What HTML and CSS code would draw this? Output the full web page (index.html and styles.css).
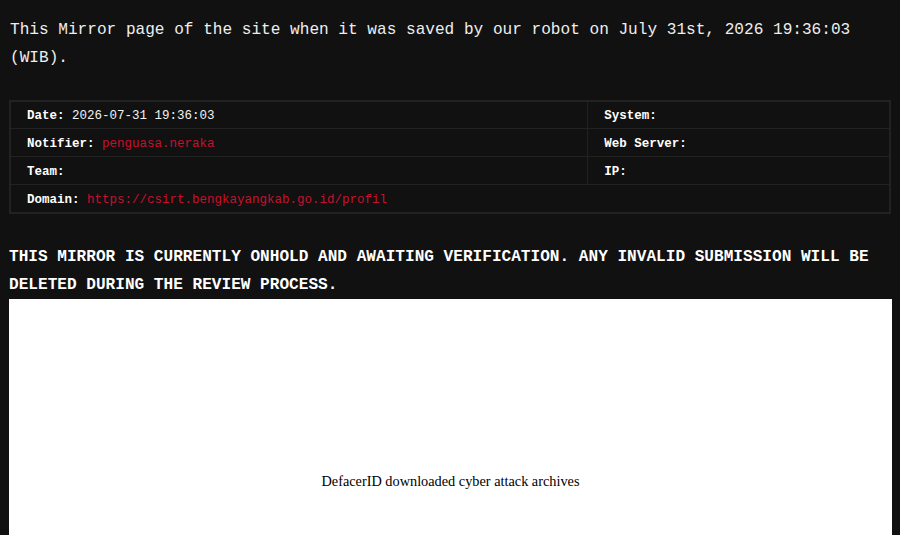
FILE: index.html
```html
<!DOCTYPE html>
<html lang="en">
<head>
<meta charset="utf-8">
<title>Mirror</title>
<link rel="stylesheet" href="styles.css">
</head>
<body>
<p class="intro">This Mirror page of the site when it was saved by our robot on July 31st, 2026 19:36:03 (WIB).</p>
<table class="info">
  <colgroup><col class="c1"><col class="c2"></colgroup>
  <tr><td><b>Date:</b> 2026-07-31 19:36:03</td><td><b>System:</b></td></tr>
  <tr class="tall"><td><b>Notifier:</b> <span class="red">penguasa.neraka</span></td><td><b>Web Server:</b></td></tr>
  <tr class="tall"><td><b>Team:</b></td><td><b>IP:</b></td></tr>
  <tr class="tall"><td colspan="2"><b>Domain:</b> <span class="red">https://csirt.bengkayangkab.go.id/profil</span></td></tr>
</table>
<h2 class="notice">THIS MIRROR IS CURRENTLY ONHOLD AND AWAITING VERIFICATION. ANY INVALID SUBMISSION WILL BE DELETED DURING THE REVIEW PROCESS.</h2>
<div class="frame"><span class="frame-text">DefacerID downloaded cyber attack archives</span></div>
</body>
</html>
```
FILE: styles.css
```css
html, body {
  background: #111111;
}
body {
  margin: 0;
  padding: 0 9px;
  color: #eeeeee;
  font-family: "Liberation Mono", "DejaVu Sans Mono", monospace;
  font-size: 16.1px;
  line-height: 28px;
  overflow: hidden;
}
.intro {
  margin: 16px 0 28px 1px;
}
.info {
  width: 882px;
  border-collapse: collapse;
  border: 2px solid #222222;
  font-size: 12.5px;
  line-height: 16px;
}
.info .c1 { width: 579px; }
.info .c2 { width: 303px; }
.info td {
  border: 1px solid #222222;
  padding: 6px 16px 4px 16px;
  height: 16px;
  color: #f2f2f2;
}
.info .tall td {
  padding-top: 7px;
}
.info b {
  color: #ffffff;
  font-weight: bold;
}
.red {
  color: #c8102e;
}
.notice {
  margin: 29px 0 0 0;
  font-size: 16.1px;
  line-height: 28px;
  font-weight: bold;
  color: #ffffff;
}
.frame {
  width: 883px;
  height: 364px;
  background: #ffffff;
  display: flex;
  align-items: center;
  justify-content: center;
  font-family: "Liberation Serif", "Times New Roman", serif;
  font-size: 14.3px;
  line-height: 18px;
  color: #000000;
}
```
